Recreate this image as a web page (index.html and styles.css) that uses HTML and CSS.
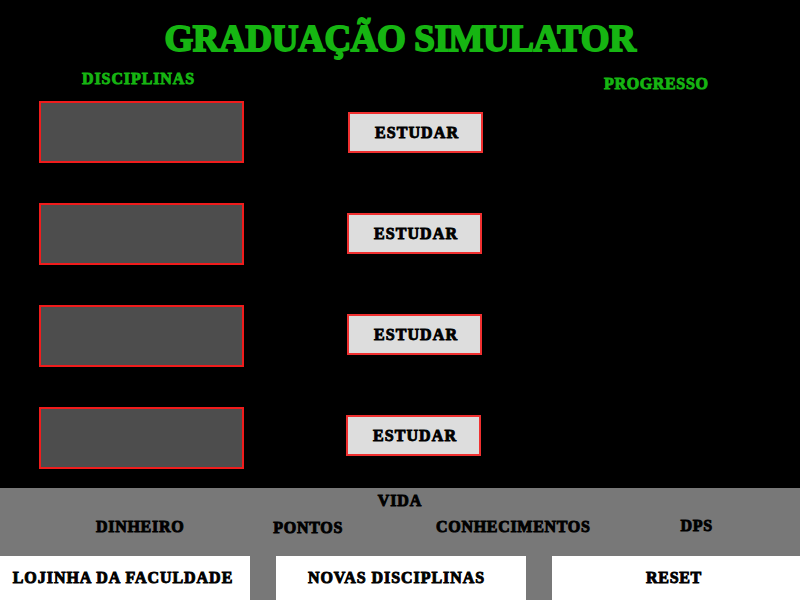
FILE: index.html

```html
<!DOCTYPE html>
<html lang="pt">
<head>
  <meta charset="UTF-8" />
  <title>Graduação Simulator</title>
  <link rel="stylesheet" href="styles.css">
</head>
<body>
  <h1 class="title">GRADUAÇÃO SIMULATOR</h1>
  <main class="game">
    <div class="col-disc">
      <div class="head">DISCIPLINAS</div>
      <div class="slot"></div>
      <div class="slot"></div>
      <div class="slot"></div>
      <div class="slot"></div>
    </div>
    <div class="col-study">
      <button class="study">ESTUDAR</button>
      <button class="study study-2">ESTUDAR</button>
      <button class="study study-3">ESTUDAR</button>
      <button class="study study-4">ESTUDAR</button>
    </div>
    <div class="col-prog">
      <div class="head">PROGRESSO</div>
    </div>
  </main>
  <footer class="bottom">
    <div class="life">VIDA</div>
    <div class="stats">
      <span class="stat-money">DINHEIRO</span>
      <span class="stat-points">PONTOS</span>
      <span class="stat-know">CONHECIMENTOS</span>
      <span class="stat-dps">DPS</span>
    </div>
    <div class="menu">
      <button class="menu-btn menu-shop">LOJINHA DA FACULDADE</button>
      <button class="menu-btn menu-new">NOVAS DISCIPLINAS</button>
      <button class="menu-btn menu-reset">RESET</button>
    </div>
  </footer>
</body>
</html>
```

FILE: styles.css

```css
html, body {
  margin: 0;
  height: 600px;
  overflow: hidden;
}
body {
  background: #000;
  font-family: "Liberation Serif", serif;
  font-weight: bold;
  color: #000;
  display: flex;
  flex-direction: column;
}
.title {
  margin: 15px 0 0;
  height: 48px;
  text-align: center;
  color: #16b512;
  font-size: 37px;
  line-height: 48px;
  letter-spacing: -0.4px;
  -webkit-text-stroke: 1.8px #16b512;
}
.game {
  flex: 1;
  display: flex;
}
.head {
  color: #16b512;
  font-size: 16px;
  line-height: 18px;
  letter-spacing: 0.9px;
  -webkit-text-stroke: 0.9px #16b512;
}
.col-disc {
  width: 205px;
  margin-left: 39px;
  display: flex;
  flex-direction: column;
  gap: 40px;
}
.col-disc .head {
  margin: 7px 0 -27px 43px;
}
.slot {
  height: 58px;
  background: #4d4d4d;
  border: 2px solid #f01c1c;
}
.col-study {
  width: 135px;
  margin-left: 104px;
  padding-top: 49px;
  display: flex;
  flex-direction: column;
  gap: 60px;
}
.study {
  width: 135px;
  height: 41px;
  padding: 0 0 0 3px;
  background: #ddd;
  border: 2px solid #f03030;
  color: #000;
  font: bold 16px "Liberation Serif", serif;
  letter-spacing: 1.1px;
  -webkit-text-stroke: 0.9px #000;
}
.study-2, .study-3 {
  margin-left: -1px;
}
.study-4 {
  margin-left: -2px;
}
.col-prog {
  margin-left: 121px;
}
.col-prog .head {
  margin-top: 12px;
  letter-spacing: 0.65px;
}
.bottom {
  height: 112px;
  background: #787878;
  display: flex;
  flex-direction: column;
}
.life {
  height: 26px;
  padding-top: 4px;
  box-sizing: border-box;
  text-align: center;
  font-size: 16px;
  line-height: 18px;
  letter-spacing: 0.9px;
  -webkit-text-stroke: 0.9px #000;
}
.stats {
  flex: 1;
  display: flex;
  font-size: 16px;
  line-height: 18px;
  letter-spacing: 0.7px;
  -webkit-text-stroke: 0.9px #000;
}
.stat-money {
  margin: 4px 0 0 96px;
}
.stat-points {
  margin: 5px 0 0 89px;
}
.stat-know {
  margin: 4px 0 0 93px;
}
.stat-dps {
  margin: 3px 0 0 90px;
}
.menu {
  height: 44px;
  display: flex;
  gap: 26px;
}
.menu-btn {
  width: 250px;
  padding: 0;
  background: #fff;
  border: 0;
  color: #000;
  font: bold 16px "Liberation Serif", serif;
  letter-spacing: 0.95px;
  -webkit-text-stroke: 0.9px #000;
}
.menu-shop {
  padding-right: 4px;
}
.menu-new {
  padding-right: 9px;
}
.menu-reset {
  width: 248px;
  padding-right: 4px;
  letter-spacing: 0.7px;
}
```
